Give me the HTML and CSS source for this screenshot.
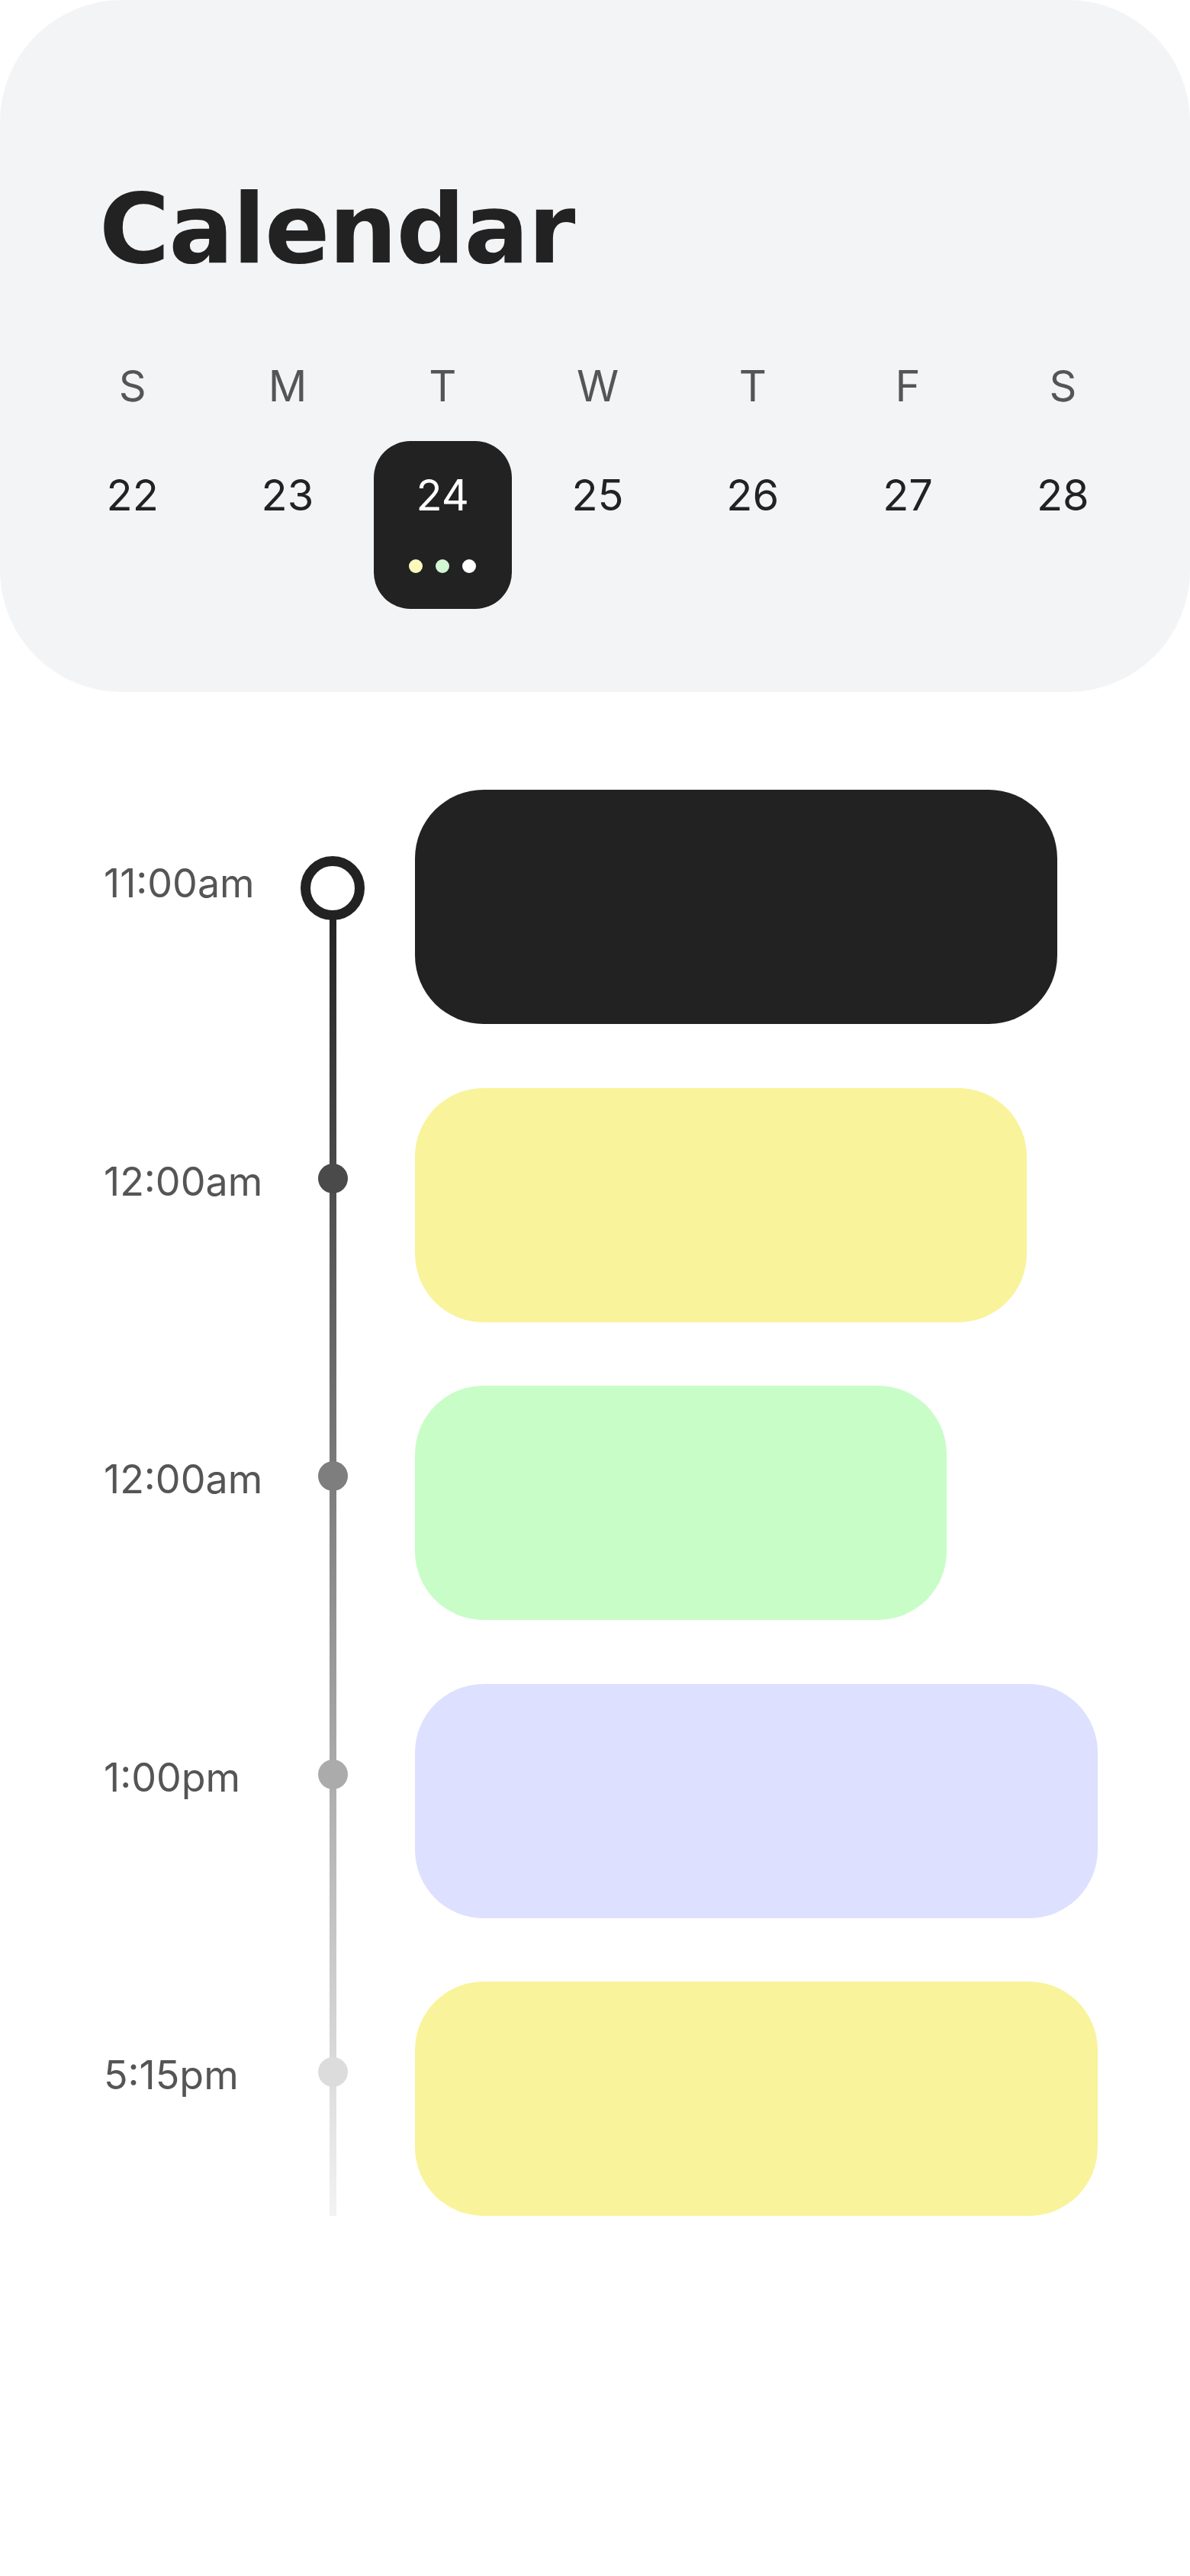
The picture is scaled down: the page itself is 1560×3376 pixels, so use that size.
FILE: index.html
```html
<!DOCTYPE html>
<html lang="en">
<head>
    <meta charset="UTF-8">
    <meta name="viewport" content="width=device-width, initial-scale=1.0">
    <title>Calendar</title>
    <link rel="stylesheet" href="styles.css">
</head>
<body>
    <div class="app">
        <header class="header">
            <h1>Calendar</h1>
            <div class="week">
                <div class="day"><span class="day-name">S</span><div class="day-num">22</div></div>
                <div class="day"><span class="day-name">M</span><div class="day-num">23</div></div>
                <div class="day active">
                    <span class="day-name">T</span>
                    <div class="day-num">
                        24
                        <div class="dots">
                            <span class="dot dot-yellow"></span>
                            <span class="dot dot-green"></span>
                            <span class="dot dot-white"></span>
                        </div>
                    </div>
                </div>
                <div class="day"><span class="day-name">W</span><div class="day-num">25</div></div>
                <div class="day"><span class="day-name">T</span><div class="day-num">26</div></div>
                <div class="day"><span class="day-name">F</span><div class="day-num">27</div></div>
                <div class="day"><span class="day-name">S</span><div class="day-num">28</div></div>
            </div>
        </header>

        <section class="timeline">
            <div class="slot">
                <span class="time">11:00am</span>
                <div class="marker-cell"><span class="marker ring"></span></div>
                <div class="event event-dark" style="width: 842px"></div>
            </div>
            <div class="slot">
                <span class="time">12:00am</span>
                <div class="marker-cell"><span class="marker dot-1"></span></div>
                <div class="event event-yellow" style="width: 802px"></div>
            </div>
            <div class="slot">
                <span class="time">12:00am</span>
                <div class="marker-cell"><span class="marker dot-2"></span></div>
                <div class="event event-green" style="width: 697px"></div>
            </div>
            <div class="slot">
                <span class="time">1:00pm</span>
                <div class="marker-cell"><span class="marker dot-3"></span></div>
                <div class="event event-lavender" style="width: 895px"></div>
            </div>
            <div class="slot">
                <span class="time">5:15pm</span>
                <div class="marker-cell"><span class="marker dot-4"></span></div>
                <div class="event event-yellow" style="width: 895px"></div>
            </div>
        </section>
    </div>
</body>
</html>
```

FILE: styles.css
```css
body {
    margin: 0;
    font-family: Inter, "Liberation Sans", sans-serif;
    background: #fff;
    color: #222;
}
.app {
    width: 1560px;
}

/* header / week strip */
.header {
    background: #f3f4f6;
    border-radius: 160px;
    padding: 237px 65px 109px 72px;
}
h1 {
    font-family: "DejaVu Sans", Inter, sans-serif;
    font-size: 126px;
    font-weight: 700;
    line-height: 128px;
    letter-spacing: -0.01em;
    margin: 0 0 113px 58px;
    color: #222;
}
.week {
    display: grid;
    grid-template-columns: repeat(7, 1fr);
}
.day {
    display: flex;
    flex-direction: column;
    align-items: center;
}
.day-name {
    font-size: 56px;
    line-height: 56px;
    color: #555;
    margin-bottom: 44px;
}
.day-num {
    width: 181px;
    height: 220px;
    box-sizing: border-box;
    padding-top: 43px;
    border-radius: 48px;
    font-size: 56px;
    line-height: 56px;
    display: flex;
    flex-direction: column;
    align-items: center;
}
.day.active .day-num {
    background: #222;
    color: #fff;
}
.dots {
    display: flex;
    gap: 17px;
    margin-top: 56px;
}
.dot {
    width: 18px;
    height: 18px;
    border-radius: 50%;
}
.dot-yellow { background: #fbf8bd; }
.dot-green { background: #d3f6d3; }
.dot-white { background: #fff; }

/* timeline */
.timeline {
    position: relative;
    padding-top: 128px;
    display: flex;
    flex-direction: column;
    gap: 83.5px;
}
.timeline::before {
    content: "";
    position: absolute;
    left: 432px;
    width: 9px;
    top: 257px;
    height: 1840px;
    background: linear-gradient(#222 2%, #fff);
}
.slot {
    display: flex;
    height: 307px;
    padding-left: 136px;
}
.time {
    width: 258px;
    margin-top: 97px;
    font-size: 52px;
    line-height: 51px;
    color: #555;
}
.marker-cell {
    width: 84px;
    display: flex;
    justify-content: center;
    align-items: flex-start;
}
.marker {
    position: relative;
    z-index: 1;
    border-radius: 50%;
    width: 39px;
    height: 39px;
    margin-top: 99px;
}
.marker.ring {
    width: 84px;
    height: 84px;
    box-sizing: border-box;
    border: 13px solid #222;
    background: #fff;
    margin-top: 87px;
}
.dot-1 { background: #4a4a4a; }
.dot-2 { background: #7e7e7e; }
.dot-3 { background: #ababab; }
.dot-4 { background: #dcdcdc; }

.event {
    margin-left: 66px;
    border-radius: 90px;
}
.event-dark { background: #222; }
.event-yellow { background: #f9f39b; }
.event-green { background: #c8fdc7; }
.event-lavender { background: #dde0fe; }
```
